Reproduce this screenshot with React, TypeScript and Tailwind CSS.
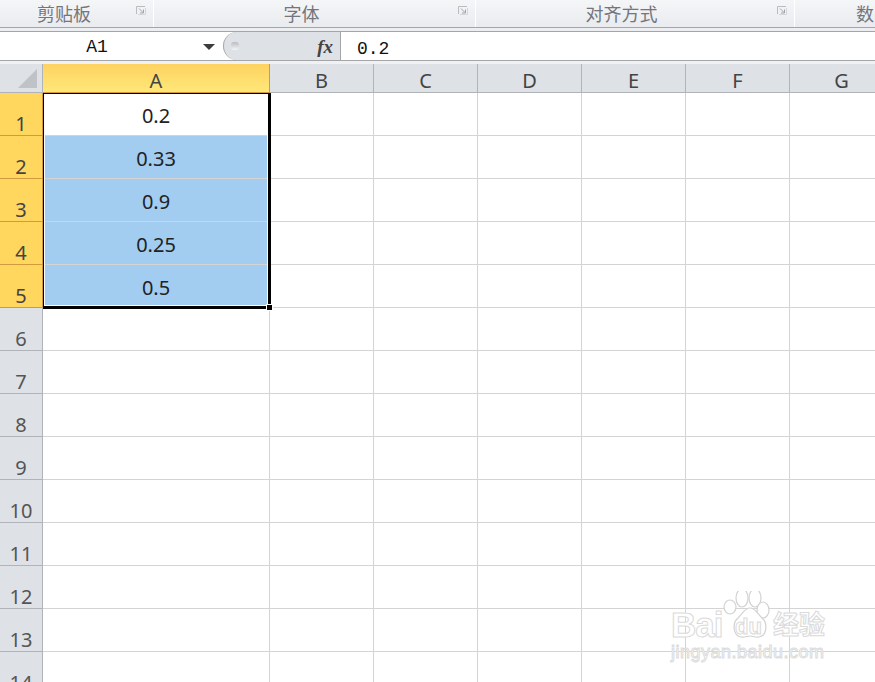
const columns = ['B', 'C', 'D', 'E', 'F', 'G']
const colValues = ['0.2', '0.33', '0.9', '0.25', '0.5']
const rows = [1, 2, 3, 4, 5, 6, 7, 8, 9, 10, 11, 12, 13, 14]

function Launcher() {
  return (
    <svg width="10" height="9" viewBox="0 0 10 9" className="shrink-0">
      <path d="M.5 8V.5H9" fill="none" stroke="#b8bbc0" />
      <path d="M3 2.5l4 4M7.5 3.5v3.5H4" fill="none" stroke="#a0a3a9" />
      <path d="M9.5 2v6.5H2" fill="none" stroke="#d4d6da" />
    </svg>
  )
}

function RibbonGroup({ label, className, launcher }: { label: string; className: string; launcher: string }) {
  return (
    <div className={`relative flex h-full items-center border-r border-white ${className}`}>
      <span className="text-[18px] leading-none text-[#73767d]">{label}</span>
      <div className={`absolute top-[6px] ${launcher}`}>
        <Launcher />
      </div>
    </div>
  )
}

function Watermark() {
  return (
    <div className="pointer-events-none absolute left-[671px] top-[587px] h-[75px] w-[160px] font-['Liberation_Sans','Noto_Sans_CJK_SC',sans-serif]">
      <svg width="60" height="58" viewBox="0 0 60 58" className="absolute left-[50px] top-[4px]">
        <g fill="#ffffff" stroke="#d2d2d2" strokeWidth="1.2">
          <ellipse cx="9" cy="16" rx="6" ry="7" />
          <ellipse cx="21" cy="7" rx="6" ry="9" />
          <ellipse cx="34" cy="7" rx="6" ry="9" />
          <ellipse cx="42" cy="19" rx="6" ry="8" />
          <path d="M29 17c5 0 7 5 12 10 6 5 5 18-3 19-4 .5-6-1-9-1s-5 1.5-9 1c-8-1-9-14-3-19 5-5 7-10 12-10z" />
        </g>
      </svg>
      <span className="absolute left-0 top-[18px] text-[35px] font-bold leading-[40px] tracking-[-1px] text-white [-webkit-text-stroke:1px_#dadada]">Bai</span>
      <span className="absolute left-[64px] top-[28px] text-[22px] font-bold leading-[24px] text-white [-webkit-text-stroke:1px_#dadada]">du</span>
      <span className="absolute left-[102px] top-[23px] text-[26px] font-bold leading-[30px] text-white [-webkit-text-stroke:1px_#dadada]">经验</span>
      <span className="absolute left-0 top-[56px] whitespace-nowrap text-[18px] leading-[18px] tracking-[.5px] text-white [-webkit-text-stroke:1px_#dcdcdc]">jingyan.baidu.com</span>
    </div>
  )
}

export default function App() {
  return (
    <div className="relative h-[682px] w-[875px] overflow-hidden bg-white font-['Noto_Sans','Noto_Sans_CJK_SC',sans-serif]">
      {/* Ribbon group labels */}
      <div className="flex h-[28px] border-b border-[#a3a5a8] bg-gradient-to-b from-[#f5f6f8] to-[#e9ebee]">
        <div className="relative flex h-full w-[154px] items-center border-r border-white pl-[37px]">
          <span className="text-[18px] leading-none text-[#73767d]">剪贴板</span>
          <div className="absolute left-[136px] top-[6px]">
            <Launcher />
          </div>
        </div>
        <RibbonGroup label="字体" className="w-[322px] justify-center pr-[26px]" launcher="left-[304px]" />
        <RibbonGroup label="对齐方式" className="w-[319px] justify-center pr-[27px]" launcher="left-[301px]" />
        <div className="flex flex-1 items-center overflow-hidden pl-[61px]">
          <span className="whitespace-nowrap text-[18px] leading-none text-[#73767d]">数字</span>
        </div>
      </div>
      <div className="h-[3px] bg-[#eceef1]" />

      {/* Formula bar */}
      <div className="flex h-[30px] border-y border-[#a3a5a8] bg-white">
        <div className="flex w-[223px] items-center">
          <span className="w-[194px] pt-[3px] text-center font-['Liberation_Mono',monospace] text-[18px] text-[#111]">A1</span>
          <svg width="12" height="6" viewBox="0 0 12 6" className="ml-[9px] mt-[2px]">
            <path d="M0 0h12L6 6z" fill="#3c3c3c" />
          </svg>
        </div>
        <div className="flex w-[117px] items-center rounded-l-[15px] border-l border-[#a3a5a8] bg-[#dee1e6] pl-[7px] pr-[7px]">
          <div className="h-[8px] w-[8px] rounded-[3px] bg-gradient-to-b from-[#b9bcc1] to-[#f5f5f5]" />
          <span className="ml-auto font-['Liberation_Serif',serif] text-[19px] font-bold italic leading-none text-[#444]">fx</span>
        </div>
        <div className="flex-1 border-l border-[#a3a5a8] pl-[16px] pt-[3px] font-['Liberation_Mono',monospace] text-[18px] leading-[28px] text-[#111]">
          0.2
        </div>
      </div>
      <div className="h-[3px] bg-[#f0f1f3]" />

      {/* Sheet */}
      <div className="relative">
        <div className="grid grid-cols-[43px_227px_104px_104px_104px_104px_104px_104px] text-[20px] text-[#222]">
          <div className="flex h-[29px] items-end justify-end border-b border-r border-[#b0b3b7] bg-[#dee1e6] pb-[4px] pr-[5px]">
            <svg width="19" height="19" viewBox="0 0 19 19">
              <path d="M19 0v19H0z" fill="#bfc2c6" />
            </svg>
          </div>
          <div className="flex h-[29px] items-center justify-center border-b border-r border-[#d29a3c] bg-gradient-to-b from-[#fdd261] to-[#ffe878] pt-[5px] text-[#444]">A</div>
          {columns.map((c) => (
            <div key={c} className="flex h-[29px] items-center justify-center border-b border-r border-[#b0b3b7] bg-[#dee1e6] pt-[5px] text-[#444]">
              {c}
            </div>
          ))}
          {rows.map((r) => {
            const selected = r <= 5
            return (
              <div key={r} className="contents">
                <div
                  className={`flex h-[43px] items-end justify-center border-b border-r leading-[22px] ${
                    selected ? 'border-[#d29a3c] bg-[#ffd75f] text-[#444]' : 'border-[#b0b3b7] bg-[#dee1e6] text-[#555]'
                  }`}
                >
                  {r}
                </div>
                <div
                  className={`flex h-[43px] items-center justify-center border-b border-r border-[#d4d4d4] pt-[4px] ${
                    selected && r > 1 ? 'bg-[#a3cdf0]' : 'bg-white'
                  }`}
                >
                  {selected ? colValues[r - 1] : ''}
                </div>
                {columns.map((c) => (
                  <div key={c} className="h-[43px] border-b border-r border-[#d4d4d4]" />
                ))}
              </div>
            )
          })}
        </div>

        {/* Selection outline */}
        <div className="pointer-events-none absolute left-[43px] top-[29px] h-[216px] w-[228px] border-b-[3px] border-l border-r-[3px] border-t border-black shadow-[inset_1px_0_0_#fff,inset_-1px_0_0_#fff,inset_0_-1px_0_#fff]" />
        <div className="absolute left-[266px] top-[240px] h-[7px] w-[7px] border border-white bg-black" />
      </div>

      <Watermark />
    </div>
  )
}
